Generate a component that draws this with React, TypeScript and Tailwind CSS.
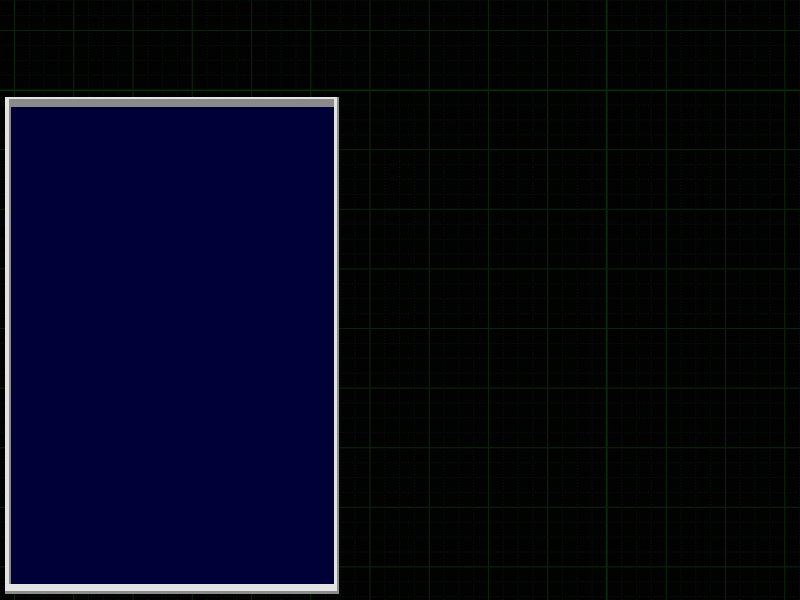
import React from "react";

// Canvas grid drawn behind the panel
function GridCanvas() {
	return (
		<svg className="absolute inset-0" width="800" height="600">
			<defs>
				<pattern id="minor" x="14" y="30" width="14.81" height="14.9" patternUnits="userSpaceOnUse">
					<line x1="0.5" y1="0" x2="0.5" y2="14.9" stroke="#081608" strokeWidth="1" strokeDasharray="1 2" />
					<line x1="0" y1="0.5" x2="14.81" y2="0.5" stroke="#081608" strokeWidth="1" strokeDasharray="1 2" />
				</pattern>
				<pattern id="major" x="14" y="30" width="59.25" height="59.6" patternUnits="userSpaceOnUse">
					<line x1="0.5" y1="0" x2="0.5" y2="59.6" stroke="#0a240a" strokeWidth="1" />
					<line x1="0" y1="0.5" x2="59.25" y2="0.5" stroke="#0a240a" strokeWidth="1" />
				</pattern>
			</defs>
			<rect width="800" height="600" fill="#020202" />
			<rect width="800" height="600" fill="url(#minor)" />
			<rect width="800" height="600" fill="url(#major)" />
			{/* origin axes are a bit heavier */}
			<line x1="606.5" y1="0" x2="606.5" y2="600" stroke="#0b2a0b" strokeWidth="1.5" />
			<line x1="0" y1="90.5" x2="800" y2="90.5" stroke="#0b2a0b" strokeWidth="1.5" />
		</svg>
	);
}

export default function App() {
	return (
		<div className="relative w-[800px] h-[600px] overflow-hidden bg-black">
			<GridCanvas />
			<div className="relative pt-[97px] pl-[5px]">
				<div className="w-[334px] h-[497px] bg-[#e3e3e3] border-r-2 border-b-[3px] border-[#8c8c8c] pl-1 pt-0.5 pr-[3px] pb-[7px]">
					<div className="h-full bg-[#000038] border-t-[8px] border-l-2 border-[#8a8a8a]"></div>
				</div>
			</div>
		</div>
	);
}
